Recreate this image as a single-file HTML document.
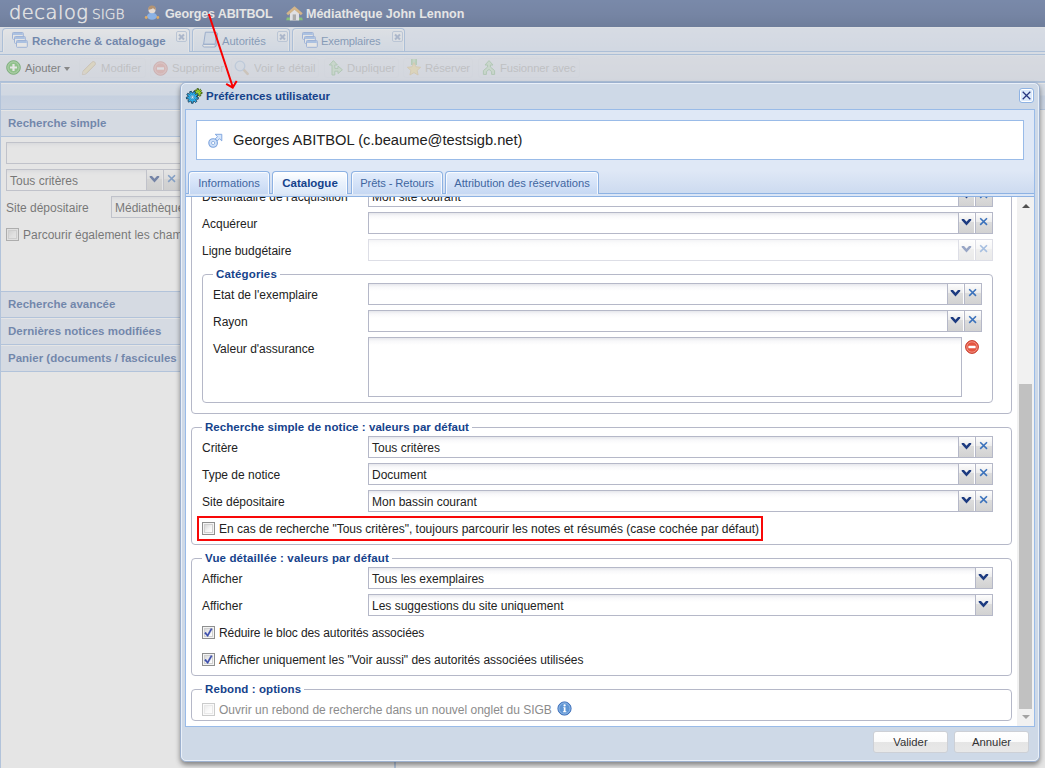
<!DOCTYPE html>
<html lang="fr">
<head>
<meta charset="utf-8">
<title>Decalog SIGB - Préférences utilisateur</title>
<style>
*{box-sizing:border-box;margin:0;padding:0}
html,body{width:1045px;height:768px;overflow:hidden;background:#fff}
body{font-family:"Liberation Sans",Arial,sans-serif;font-size:12px;color:#222;position:relative}
.a{position:absolute}
.t{position:absolute;white-space:nowrap;line-height:14px}
svg{position:absolute;overflow:visible}
/* header */
#hdr{position:absolute;left:0;top:0;width:1045px;height:27px;background:linear-gradient(#274787,#203e7c 55%,#102f6a)}
#hdr .logo{position:absolute;left:9px;top:5px;height:22px;overflow:hidden;font-family:"DejaVu Sans Light","DejaVu Sans",sans-serif;font-weight:200;font-size:19.4px;color:#fff;letter-spacing:.55px;line-height:30px;white-space:nowrap;-webkit-text-stroke:.45px #fff}
#hdr .sigb{position:absolute;left:92px;top:2px;font-family:"DejaVu Sans Light","DejaVu Sans",sans-serif;font-weight:200;font-size:13.8px;color:#fff;line-height:24px;-webkit-text-stroke:.3px #fff}
#hdr .h{position:absolute;top:7px;font-weight:bold;font-size:12.5px;color:#fff;line-height:15px;white-space:nowrap}
/* main tabs */
#tabs{position:absolute;left:0;top:27px;width:1045px;height:28px;background:linear-gradient(#e2ebfb,#d6e3f8);border-top:1px solid #ecf2fb;border-bottom:1px solid #8db2e3}
#tabs .sp{position:absolute;left:0;top:23px;width:1045px;height:3px;background:#e2ecfb;border-top:1px solid #8db2e3}
.mtab{position:absolute;top:0;height:23px;border:1px solid #8db2e3;border-bottom:none;border-radius:4px 4px 0 0;background:linear-gradient(#edf3fc,#d6e4f7);white-space:nowrap;font-size:11.2px;color:#416aa3;box-shadow:inset 1px 1px 0 rgba(255,255,255,.7),inset -1px 0 0 rgba(255,255,255,.7)}
.mtab.on{background:linear-gradient(#fbfcff,#e9f1fc 50%,#e2ecfb);color:#15428b;font-weight:bold;font-size:11.5px;height:24px}
.mtab .x{position:absolute;top:2px;width:11px;height:11px;border:1px solid #a9bfdf;border-radius:2px;background:rgba(255,255,255,.3)}
.mtab .x:before,.mtab .x:after{content:"";position:absolute;left:1px;top:3.5px;width:7px;height:2px;background:#8aa1c8;transform:rotate(45deg)}
.mtab .x:after{transform:rotate(-45deg)}
/* toolbar */
#tb{position:absolute;left:0;top:55px;width:1045px;height:27px;background:linear-gradient(#e2e8f4,#dae1f0);border-bottom:1px solid #8db2e3;border-top:1px solid #e9f0fa}
#tb .b{position:absolute;top:5px;font-size:11.3px;line-height:14px;white-space:nowrap;color:#333}
#tb .d{color:#969696;opacity:.62}
.ic{opacity:.42}
/* west panel */
#west{position:absolute;left:0;top:82px;width:395px;height:686px;background:#fff;border-left:1px solid #99bbe8;border-right:2px solid #99bbe8}
.phd{position:absolute;left:0;width:1045px;height:28px;border-top:1px solid #99bbe8;border-bottom:1px solid #99bbe8;background:linear-gradient(#fff 0,#fff 1px,#dbe8fa 1px,#d6e4f8 12px,#bfd4f3 13px,#c8daf5 100%)}
.ahd{position:absolute;left:1px;width:394px;height:27px;border-bottom:1px solid #99bbe8;border-top:1px solid #fff;background:#dfe9f9;color:#15428b;font-weight:bold;font-size:11.5px;line-height:14px;padding:5px 0 0 7px;white-space:nowrap}
.wf{position:absolute;height:22px;border:1px solid #b5b8c8;background:linear-gradient(#e8e9ee,#fafafb 3px,#fff 6px);font-size:12px;line-height:22px;padding-left:3px;white-space:nowrap;color:#222}
/* mask */
#mask{position:absolute;left:0;top:0;width:1045px;height:768px;background:rgba(204,204,204,.5)}
/* window */
#win{position:absolute;left:180px;top:82px;width:860px;height:680px;background:#ced9e7;border:1px solid #9db1cf;border-radius:6px;box-shadow:0 3px 5px 0 rgba(0,0,0,.42)}
#win .inner{position:absolute;left:0;top:0;right:0;bottom:0;border:1px solid #e9f0f9;border-radius:5px}
#wbody{position:absolute;left:185px;top:109px;width:850px;height:618px;background:#dfe8f6;border:1px solid #99bbe8}
#ubox{position:absolute;left:196px;top:120px;width:828px;height:40px;background:#fff;border:1px solid #99bbe8}
#tstrip{position:absolute;left:186px;top:161px;width:848px;height:33px;background:linear-gradient(#dfe8f6 30%,#cddbf0);border-bottom:1px solid #8db2e3}
.wt{position:absolute;top:171px;height:23px;border:1px solid #8db2e3;border-bottom:none;border-radius:4px 4px 0 0;background:linear-gradient(#e3edfc,#d5e3f8 50%,#c6d8f3);color:#3f66a0;font-size:11.2px;line-height:23px;text-align:center;white-space:nowrap;box-shadow:inset 1px 1px 0 rgba(255,255,255,.8),inset -1px 0 0 rgba(255,255,255,.8)}
.wt.on{background:linear-gradient(#ffffff,#eaf2fc 45%,#dbe8f9);color:#15428b;font-weight:bold;font-size:11.5px;height:24px}
#tsp{position:absolute;left:186px;top:194px;width:848px;height:3px;background:#dbe6f6;border-bottom:1px solid #8db2e3}
#content{position:absolute;left:186px;top:197px;width:848px;height:529px;background:#fff;overflow:hidden}
#cin{position:absolute;left:-186px;top:-197px;width:0;height:0}
#cin .t{font-size:12px;color:#222}
.f{position:absolute;height:22px;border:1px solid #b5b8c8;background:linear-gradient(#e6e7ec,#f8f8fa 3px,#fff 7px);font-size:12px;line-height:22px;padding-left:3px;white-space:nowrap;color:#222}
.f.c{border-right:none}
.tg{position:absolute;width:17px;height:22px;border:1px solid #b5b8c8;border-right:none;background:linear-gradient(#fdfdfd,#ececec 45%,#dddddd 45%,#d2d2d2)}
.tg.hl{box-shadow:inset -1px 0 0 #fff}
.tg.r{width:18px;border-right:1px solid #b5b8c8}
.tg svg{left:-1px;top:-1px}
.dis{opacity:.45}
.fs{position:absolute;border:1px solid #b5b8c8;border-radius:4px}
.lg{position:absolute;top:-8px;background:#fff;padding:0 3px;font-weight:bold;font-size:11.5px;line-height:14px;color:#15428b;white-space:nowrap}
.cb{position:absolute;width:13px;height:13px;border:1px solid #8e8f8f;background:#f4f4f4}
.cb i{position:absolute;left:1px;top:1px;right:1px;bottom:1px;border:1px solid #d0d0d0;background:linear-gradient(135deg,#d8d8d8,#f3f3f3 55%,#fff)}
#sb{position:absolute;left:1017px;top:197px;width:17px;height:529px;background:#f1f1f1}
#sb .th{position:absolute;left:2px;top:187px;width:13px;height:325px;background:#c1c1c1}
.btn{position:absolute;top:731px;width:75px;height:22px;border:1px solid #cdd0d6;border-radius:3px;background:linear-gradient(#ffffff,#fbfbfb 50%,#e5e5e5 50%,#e8e8e8);font-size:11.3px;line-height:21px;text-align:center;color:#333}
</style>
</head>
<body>
<div id="hdr"><span class="logo"><span style="display:block;margin-top:-7px">decalog</span></span><span class="sigb">SIGB</span><svg style="left:145px;top:5px" width="15" height="15" viewBox="0 0 15 15"><ellipse cx="7" cy="11.3" rx="5" ry="3.5" fill="#4a98ff"/><circle cx="1.2" cy="12.5" r="1.4" fill="#f08a00"/><circle cx="12.8" cy="12.5" r="1.4" fill="#f08a00"/><circle cx="7" cy="4.7" r="3.6" fill="#ffeadb"/><path d="M3.2 4.9C3 1.7 5.1 0.5 7.1 0.5C9.3 0.5 11.1 1.9 10.8 4.9C9.7 4.7 8.7 4 8.1 3.1C7.1 4.1 5.1 4.8 3.2 4.9Z" fill="#9a5a1a"/></svg><span class="h" style="left:165px;letter-spacing:-.12px">Georges ABITBOL</span><svg style="left:285.5px;top:5.5px" width="17" height="15" viewBox="0 0 17 15"><path d="M0.2 14.2H5.4V11.6H0.9Z" fill="#43b02c"/><path d="M11.6 14.2H16.8L16.1 11.6H11.6Z" fill="#43b02c"/><path d="M3.9 7L8.5 3L13.1 7V14.4H3.9Z" fill="#f4f4fa"/><rect x="6.7" y="8.4" width="3.3" height="6" fill="#8d8d8d"/><path d="M0.3 7.3L8.5 0.2L16.7 7.3L14.9 9.2L8.5 3.8L2.1 9.2Z" fill="#dc9e48"/></svg><span class="h" style="left:306px">Médiathèque John Lennon</span></div>
<div id="tabs"><div class="sp"></div><div class="mtab on" style="left:2px;width:188px"><span class="t" style="left:29px;top:5px">Recherche &amp; catalogage</span><i class="x" style="left:173px"></i></div><div class="mtab" style="left:192px;width:98px"><span class="t" style="left:29px;top:5px;letter-spacing:-.05px">Autorités</span><i class="x" style="left:84px"></i></div><div class="mtab" style="left:292px;width:113px"><span class="t" style="left:28px;top:5px;letter-spacing:-.2px">Exemplaires</span><i class="x" style="left:99px"></i></div></div>
<svg style="left:12px;top:32px" width="17" height="17" viewBox="0 0 17 17"><rect x="0.5" y="0.5" width="10.8" height="6.8" rx=".8" fill="#fff" stroke="#729ae0" stroke-width="1"/><rect x="1" y="1" width="9.8" height="2" fill="#8ab6f6"/><rect x="2.5" y="4.5" width="10.8" height="6.8" rx=".8" fill="#fff" stroke="#729ae0" stroke-width="1"/><rect x="3" y="5" width="9.8" height="2" fill="#8ab6f6"/><rect x="4.5" y="8.5" width="10.8" height="6.8" rx=".8" fill="#fff" stroke="#729ae0" stroke-width="1"/><rect x="5" y="9" width="9.8" height="2" fill="#8ab6f6"/></svg><svg style="left:202px;top:31px" width="17" height="18" viewBox="0 0 17 18"><path d="M3.4 1.2H14.2L13.2 13.2H1.6Z" fill="#cfe0f8" stroke="#6a8fca" stroke-width="1"/><path d="M1.2 13.4H13.2V16H2.2C0.6 16 0.4 14 1.2 13.4Z" fill="#fff" stroke="#6a8fca" stroke-width="1"/><path d="M14.2 1.2L15.6 2.4L14.6 14.6L13.2 16" fill="none" stroke="#6a8fca" stroke-width="1"/></svg><svg style="left:302px;top:32px" width="17" height="17" viewBox="0 0 17 17"><rect x="0.5" y="0.5" width="10.8" height="6.8" rx=".8" fill="#fff" stroke="#729ae0" stroke-width="1"/><rect x="1" y="1" width="9.8" height="2" fill="#8ab6f6"/><rect x="2.5" y="4.5" width="10.8" height="6.8" rx=".8" fill="#fff" stroke="#729ae0" stroke-width="1"/><rect x="3" y="5" width="9.8" height="2" fill="#8ab6f6"/><rect x="4.5" y="8.5" width="10.8" height="6.8" rx=".8" fill="#fff" stroke="#729ae0" stroke-width="1"/><rect x="5" y="9" width="9.8" height="2" fill="#8ab6f6"/></svg>
<div id="tb"><span class="b" style="left:25px">Ajouter</span><span class="b d" style="left:101px">Modifier</span><span class="b d" style="left:172px">Supprimer</span><span class="b d" style="left:254px">Voir le détail</span><span class="b d" style="left:347px">Dupliquer</span><span class="b d" style="left:425px;letter-spacing:-.1px">Réserver</span><span class="b d" style="left:500px;letter-spacing:-.12px">Fusionner avec</span></div>
<div class="a" style="left:64px;top:67px;width:0;height:0;border:3px solid transparent;border-top:4px solid #444;border-bottom:none"></div>
<div class="a" style="left:79px;top:58px;width:67px;height:20px;border:1px solid rgba(150,165,190,.06);border-radius:3px;background:rgba(255,255,255,.02)"></div><div class="a" style="left:150px;top:58px;width:77px;height:20px;border:1px solid rgba(150,165,190,.06);border-radius:3px;background:rgba(255,255,255,.02)"></div><div class="a" style="left:231px;top:58px;width:88px;height:20px;border:1px solid rgba(150,165,190,.06);border-radius:3px;background:rgba(255,255,255,.02)"></div><div class="a" style="left:324px;top:58px;width:75px;height:20px;border:1px solid rgba(150,165,190,.06);border-radius:3px;background:rgba(255,255,255,.02)"></div><div class="a" style="left:403px;top:58px;width:70px;height:20px;border:1px solid rgba(150,165,190,.06);border-radius:3px;background:rgba(255,255,255,.02)"></div><div class="a" style="left:478px;top:58px;width:102px;height:20px;border:1px solid rgba(150,165,190,.06);border-radius:3px;background:rgba(255,255,255,.02)"></div>
<svg style="left:6px;top:60px" width="15" height="15" viewBox="0 0 15 15"><circle cx="7.5" cy="7.5" r="6.8" fill="#55b64a" stroke="#2f8f2c" stroke-width="1"/><circle cx="7.5" cy="7.5" r="5.6" fill="none" stroke="#a6dca0" stroke-width=".8"/><path d="M7.5 4V11M4 7.5H11" stroke="#fff" stroke-width="2.2"/></svg><svg class="ic" style="left:81px;top:60px" width="16" height="16" viewBox="0 0 16 16"><path d="M2.2 11L11 2.2C11.8 1.4 13 1.4 13.8 2.2C14.6 3 14.6 4.2 13.8 5L5 13.8L1.4 14.6Z" fill="#f3d36b" stroke="#a5772a" stroke-width="1"/><path d="M2.2 11L5 13.8L1.4 14.6Z" fill="#e9c9a0"/></svg><svg class="ic" style="left:152.5px;top:60.5px" width="15" height="15" viewBox="0 0 15 15"><circle cx="7.5" cy="7.5" r="6.8" fill="#e0442e" stroke="#b52a1c" stroke-width="1"/><circle cx="7.5" cy="7.5" r="5.6" fill="none" stroke="#f3a79a" stroke-width=".8"/><path d="M4 7.5H11" stroke="#fff" stroke-width="2.4"/></svg><svg class="ic" style="left:234px;top:60px" width="16" height="16" viewBox="0 0 16 16"><path d="M9.2 9.2L13.6 13.8" stroke="#b98a4a" stroke-width="2.6" stroke-linecap="round"/><circle cx="6" cy="6" r="4.8" fill="#d5e6fb" stroke="#6f9fd8" stroke-width="1.3"/></svg><svg class="ic" style="left:328px;top:60px" width="15" height="16" viewBox="0 0 15 16"><path d="M4 15V5H1.4L5.4 0.6L9.4 5H6.8V8.4H10V6L14.4 9.8L10 13.6V11.2H6.8V15Z" fill="#a6dc98" stroke="#37962f" stroke-width="1"/></svg><svg class="ic" style="left:406px;top:59px" width="16" height="17" viewBox="0 0 16 17"><path d="M5 0H11V6H5Z" fill="#4aa83c"/><path d="M6.6 0H9.4V6H6.6Z" fill="#8fd482"/><path d="M8 3.6L9.9 7.8L14.6 8.3L11.1 11.4L12.1 16L8 13.6L3.9 16L4.9 11.4L1.4 8.3L6.1 7.8Z" fill="#ffd24d" stroke="#d49a1a" stroke-width=".9"/></svg><svg class="ic" style="left:482px;top:60px" width="14" height="15" viewBox="0 0 14 15"><path d="M7 0.6L11 5H8.4V7L12.6 10.6V14.4H9.6V11.6L7 9.4L4.4 11.6V14.4H1.4V10.6L5.6 7V5H3Z" fill="#a6dc98" stroke="#37962f" stroke-width="1"/></svg>
<div class="a" style="left:0;top:82px;width:1045px;height:686px;background:#fff"></div>
<div class="phd" style="top:82px"></div>
<div class="a" style="left:0;top:82px;width:1px;height:686px;background:#99bbe8"></div>
<div class="a" style="left:394px;top:110px;width:2px;height:658px;background:#99bbe8"></div>
<div class="ahd" style="top:110px">Recherche simple</div>
<div class="wf" style="left:6px;top:142px;width:384px"></div>
<div class="wf" style="left:6px;top:169px;width:141px;border-right:none">Tous critères</div><div class="tg hl" style="left:146px;top:169px"><svg width="18" height="22" viewBox="0 0 18 22"><path d="M3.7 7H6L8.5 9.7L11 7H13.2V8.3L8.5 13.4L3.7 8.3Z" fill="#1d3b80"/></svg></div><div class="tg r" style="left:163px;top:169px"><svg width="18" height="22" viewBox="0 0 18 22"><path d="M5.2 6.2L12 12.9M12 6.2L5.2 12.9" stroke="#3b72bc" stroke-width="1.55" fill="none"/></svg></div>
<span class="t" style="left:6px;top:201px">Site dépositaire</span>
<div class="wf" style="left:111px;top:196px;width:250px">Médiathèque John Lennon</div>
<div class="cb" style="left:6px;top:228px"><i></i></div>
<span class="t" style="left:23px;top:228px">Parcourir également les champs notes et résumés</span>
<div class="ahd" style="top:291px;border-top-color:#99bbe8">Recherche avancée</div>
<div class="ahd" style="top:318px">Dernières notices modifiées</div>
<div class="ahd" style="top:345px">Panier (documents / fascicules / autorités)</div>
<div id="mask"></div>
<div id="win"><div class="inner"></div></div>
<svg style="left:185px;top:87px" width="18" height="18" viewBox="0 0 18 18"><path d="M15.75 5.07L17.08 5.25L16.93 6.74L15.59 6.64L15.16 7.34L15.86 8.49L14.60 9.31L13.84 8.20L13.02 8.30L12.56 9.56L11.14 9.09L11.53 7.80L10.94 7.22L9.66 7.65L9.15 6.24L10.40 5.74L10.49 4.93L9.36 4.19L10.14 2.91L11.31 3.58L12.00 3.14L11.87 1.79L13.36 1.61L13.56 2.94L14.34 3.20L15.31 2.26L16.38 3.31L15.47 4.30Z" fill="#a2de26" stroke="#36500e" stroke-width=".9" stroke-linejoin="round"/><circle cx="13.1" cy="5.6" r="1" fill="#d9f58a" stroke="#4d7a14" stroke-width=".6"/><path d="M11.70 10.07L13.49 10.53L13.14 12.27L11.31 11.99L10.78 12.86L11.86 14.36L10.46 15.48L9.24 14.09L8.27 14.41L8.14 16.26L6.36 16.21L6.31 14.36L5.36 13.99L4.07 15.31L2.74 14.13L3.89 12.69L3.41 11.79L1.56 11.98L1.30 10.21L3.11 9.85L3.32 8.85L1.79 7.81L2.72 6.29L4.34 7.18L5.14 6.54L4.64 4.76L6.33 4.20L7.00 5.92L8.02 5.94L8.78 4.26L10.44 4.91L9.85 6.66L10.61 7.34L12.28 6.53L13.13 8.10L11.55 9.06Z" fill="#2eb2ee" stroke="#173d58" stroke-width=".9" stroke-linejoin="round"/><circle cx="7.4" cy="10.2" r="2.5" fill="#7fd6fa" stroke="#1b7ab4" stroke-width=".7"/><circle cx="7.4" cy="10.2" r="1.1" fill="#fff" stroke="#1b5e8a" stroke-width=".5"/></svg>
<span class="t" style="left:206px;top:89px;font-weight:bold;font-size:11.5px;color:#15428b">Préférences utilisateur</span>
<div class="a" style="left:1019px;top:88px;width:15px;height:15px;border:1px solid #8fb3e3;border-radius:3px;background:#dbe9fb;box-shadow:inset 0 0 0 1px #fff"><svg width="13" height="13" viewBox="0 0 13 13" style="left:0;top:0"><path d="M2.7 2.7L10.3 10.3M10.3 2.7L2.7 10.3" stroke="#27367f" stroke-width="1.25"/></svg></div>
<div id="wbody"></div>
<div id="ubox"></div><svg style="left:207px;top:133px" width="16" height="16" viewBox="0 0 16 16"><path d="M8.2 1.3H14.8V7.9L12.5 5.7L9.6 8.6L7.6 6.6L10.5 3.6Z" fill="#d6e6fb" stroke="#7ba2dc" stroke-width=".9" stroke-linejoin="miter"/><circle cx="6.1" cy="10" r="4.3" fill="#cfe0f8" stroke="#7ba2dc" stroke-width="1.1"/><circle cx="6.1" cy="10" r="1.6" fill="#fff" stroke="#8aaee0" stroke-width=".9"/></svg>
<span class="t" style="left:233px;top:131px;font-size:14.7px;line-height:19px;color:#222">Georges ABITBOL (c.beaume@testsigb.net)</span>
<div id="tstrip"></div>
<div class="wt" style="left:188px;width:82px">Informations</div><div class="wt on" style="left:272px;width:76px">Catalogue</div><div class="wt" style="left:351px;width:92px;letter-spacing:-.12px">Prêts - Retours</div><div class="wt" style="left:445px;width:154px">Attribution des réservations</div>
<div id="tsp"></div>
<div id="content"><div id="cin"><div class="fs" style="left:191px;top:130px;width:821px;height:284px"></div>
<span class="t" style="left:202px;top:190px">Destinataire de l'acquisition</span>
<div class="f c" style="left:368px;top:185px;width:590px">Mon site courant</div><div class="tg hl" style="left:958px;top:185px"><svg width="18" height="22" viewBox="0 0 18 22"><path d="M3.7 7H6L8.5 9.7L11 7H13.2V8.3L8.5 13.4L3.7 8.3Z" fill="#1d3b80"/></svg></div><div class="tg r" style="left:975px;top:185px"><svg width="18" height="22" viewBox="0 0 18 22"><path d="M5.2 6.2L12 12.9M12 6.2L5.2 12.9" stroke="#3b72bc" stroke-width="1.55" fill="none"/></svg></div>
<span class="t" style="left:202px;top:217px">Acquéreur</span>
<div class="f c" style="left:368px;top:212px;width:590px"></div><div class="tg hl" style="left:958px;top:212px"><svg width="18" height="22" viewBox="0 0 18 22"><path d="M3.7 7H6L8.5 9.7L11 7H13.2V8.3L8.5 13.4L3.7 8.3Z" fill="#1d3b80"/></svg></div><div class="tg r" style="left:975px;top:212px"><svg width="18" height="22" viewBox="0 0 18 22"><path d="M5.2 6.2L12 12.9M12 6.2L5.2 12.9" stroke="#3b72bc" stroke-width="1.55" fill="none"/></svg></div>
<span class="t" style="left:202px;top:244px">Ligne budgétaire</span>
<div class="f c dis" style="left:368px;top:239px;width:590px"></div><div class="tg hl dis" style="left:958px;top:239px"><svg width="18" height="22" viewBox="0 0 18 22"><path d="M3.7 7H6L8.5 9.7L11 7H13.2V8.3L8.5 13.4L3.7 8.3Z" fill="#1d3b80"/></svg></div><div class="tg r dis" style="left:975px;top:239px"><svg width="18" height="22" viewBox="0 0 18 22"><path d="M5.2 6.2L12 12.9M12 6.2L5.2 12.9" stroke="#3b72bc" stroke-width="1.55" fill="none"/></svg></div>
<div class="fs" style="left:202px;top:274px;width:791px;height:129px"><span class="lg" style="left:10px;letter-spacing:0.15px">Catégories</span></div>
<span class="t" style="left:213px;top:288px">Etat de l'exemplaire</span>
<div class="f c" style="left:368px;top:283px;width:579px"></div><div class="tg hl" style="left:947px;top:283px"><svg width="18" height="22" viewBox="0 0 18 22"><path d="M3.7 7H6L8.5 9.7L11 7H13.2V8.3L8.5 13.4L3.7 8.3Z" fill="#1d3b80"/></svg></div><div class="tg r" style="left:964px;top:283px"><svg width="18" height="22" viewBox="0 0 18 22"><path d="M5.2 6.2L12 12.9M12 6.2L5.2 12.9" stroke="#3b72bc" stroke-width="1.55" fill="none"/></svg></div>
<span class="t" style="left:213px;top:315px">Rayon</span>
<div class="f c" style="left:368px;top:310px;width:579px"></div><div class="tg hl" style="left:947px;top:310px"><svg width="18" height="22" viewBox="0 0 18 22"><path d="M3.7 7H6L8.5 9.7L11 7H13.2V8.3L8.5 13.4L3.7 8.3Z" fill="#1d3b80"/></svg></div><div class="tg r" style="left:964px;top:310px"><svg width="18" height="22" viewBox="0 0 18 22"><path d="M5.2 6.2L12 12.9M12 6.2L5.2 12.9" stroke="#3b72bc" stroke-width="1.55" fill="none"/></svg></div>
<span class="t" style="left:213px;top:342px">Valeur d'assurance</span>
<div class="f" style="left:368px;top:337px;width:594px;height:60px"></div>
<svg style="left:965px;top:340px" width="14" height="14" viewBox="0 0 14 14"><circle cx="7" cy="7" r="6.4" fill="#e5543f" stroke="#c53a2a" stroke-width="1"/><circle cx="7" cy="7" r="5.2" fill="none" stroke="#f2a195" stroke-width=".8"/><rect x="3.4" y="5.8" width="7.2" height="2.5" rx=".6" fill="#fff"/></svg>
<div class="fs" style="left:191px;top:427px;width:821px;height:118px"><span class="lg" style="left:10px;letter-spacing:0.055px">Recherche simple de notice : valeurs par défaut</span></div>
<span class="t" style="left:202px;top:441px">Critère</span>
<div class="f c" style="left:368px;top:436px;width:590px">Tous critères</div><div class="tg hl" style="left:958px;top:436px"><svg width="18" height="22" viewBox="0 0 18 22"><path d="M3.7 7H6L8.5 9.7L11 7H13.2V8.3L8.5 13.4L3.7 8.3Z" fill="#1d3b80"/></svg></div><div class="tg r" style="left:975px;top:436px"><svg width="18" height="22" viewBox="0 0 18 22"><path d="M5.2 6.2L12 12.9M12 6.2L5.2 12.9" stroke="#3b72bc" stroke-width="1.55" fill="none"/></svg></div>
<span class="t" style="left:202px;top:468px">Type de notice</span>
<div class="f c" style="left:368px;top:463px;width:590px">Document</div><div class="tg hl" style="left:958px;top:463px"><svg width="18" height="22" viewBox="0 0 18 22"><path d="M3.7 7H6L8.5 9.7L11 7H13.2V8.3L8.5 13.4L3.7 8.3Z" fill="#1d3b80"/></svg></div><div class="tg r" style="left:975px;top:463px"><svg width="18" height="22" viewBox="0 0 18 22"><path d="M5.2 6.2L12 12.9M12 6.2L5.2 12.9" stroke="#3b72bc" stroke-width="1.55" fill="none"/></svg></div>
<span class="t" style="left:202px;top:495px">Site dépositaire</span>
<div class="f c" style="left:368px;top:490px;width:590px">Mon bassin courant</div><div class="tg hl" style="left:958px;top:490px"><svg width="18" height="22" viewBox="0 0 18 22"><path d="M3.7 7H6L8.5 9.7L11 7H13.2V8.3L8.5 13.4L3.7 8.3Z" fill="#1d3b80"/></svg></div><div class="tg r" style="left:975px;top:490px"><svg width="18" height="22" viewBox="0 0 18 22"><path d="M5.2 6.2L12 12.9M12 6.2L5.2 12.9" stroke="#3b72bc" stroke-width="1.55" fill="none"/></svg></div>
<div class="a" style="left:197px;top:516px;width:566px;height:25px;border:2px solid #f80808"></div>
<div class="cb" style="left:202px;top:522px"><i></i></div>
<span class="t" style="left:219px;top:522px">En cas de recherche "Tous critères", toujours parcourir les notes et résumés (case cochée par défaut)</span>
<div class="fs" style="left:191px;top:558px;width:821px;height:118px"><span class="lg" style="left:10px;letter-spacing:0.14px">Vue détaillée : valeurs par défaut</span></div>
<span class="t" style="left:202px;top:572px">Afficher</span>
<div class="f c" style="left:368px;top:567px;width:607px">Tous les exemplaires</div><div class="tg r" style="left:975px;top:567px"><svg width="18" height="22" viewBox="0 0 18 22"><path d="M3.7 7H6L8.5 9.7L11 7H13.2V8.3L8.5 13.4L3.7 8.3Z" fill="#1d3b80"/></svg></div>
<span class="t" style="left:202px;top:599px">Afficher</span>
<div class="f c" style="left:368px;top:594px;width:607px">Les suggestions du site uniquement</div><div class="tg r" style="left:975px;top:594px"><svg width="18" height="22" viewBox="0 0 18 22"><path d="M3.7 7H6L8.5 9.7L11 7H13.2V8.3L8.5 13.4L3.7 8.3Z" fill="#1d3b80"/></svg></div>
<div class="cb" style="left:202px;top:626px"><i></i><svg width="13" height="13" viewBox="0 0 13 13" style="left:-1px;top:-1px"><path d="M2.5 7.3L3.7 6.1L5.5 8.5L8.9 2.4L10.2 3.1L5.8 10.7Z" fill="#3a4cab" stroke="#3a4cab" stroke-width=".4"/></svg></div>
<span class="t" style="left:219px;top:626px;letter-spacing:-.09px">Réduire le bloc des autorités associées</span>
<div class="cb" style="left:202px;top:653px"><i></i><svg width="13" height="13" viewBox="0 0 13 13" style="left:-1px;top:-1px"><path d="M2.5 7.3L3.7 6.1L5.5 8.5L8.9 2.4L10.2 3.1L5.8 10.7Z" fill="#3a4cab" stroke="#3a4cab" stroke-width=".4"/></svg></div>
<span class="t" style="left:219px;top:653px">Afficher uniquement les "Voir aussi" des autorités associées utilisées</span>
<div class="fs" style="left:191px;top:689px;width:821px;height:32px"><span class="lg" style="left:10px;letter-spacing:0.1px">Rebond : options</span></div>
<div class="cb dis" style="left:202px;top:703px"><i></i></div>
<span class="t" style="left:219px;top:703px;color:#8c8c8c">Ouvrir un rebond de recherche dans un nouvel onglet du SIGB</span>
<svg style="left:556.5px;top:701.3px" width="15" height="15" viewBox="0 0 15 15"><circle cx="7.5" cy="7.5" r="6.6" fill="#5f95d4" stroke="#3a6cb8" stroke-width="1"/><circle cx="7.5" cy="7.5" r="5.5" fill="none" stroke="#9cc0ea" stroke-width=".8"/><circle cx="7.6" cy="4.4" r="1.15" fill="#fff"/><path d="M6.3 6.2H8.5V10.2H9.4V11.2H5.9V10.2H6.8V7.1H6.3Z" fill="#fff"/></svg></div></div>
<div id="sb"><div class="th"></div><div class="a" style="left:4.5px;top:7px;width:0;height:0;border:4.5px solid transparent;border-bottom:4.5px solid #505050;border-top:none"></div><div class="a" style="left:4.5px;top:518px;width:0;height:0;border:4px solid transparent;border-top:4.5px solid #a3a3a3;border-bottom:none"></div></div>
<div class="btn" style="left:873px">Valider</div><div class="btn" style="left:954px">Annuler</div>
<svg style="left:0;top:0" width="1045" height="768" viewBox="0 0 1045 768"><path d="M208.8 14L232.6 86.5M226.2 83.8L232.7 87.6L236.7 80.9" stroke="#f80000" stroke-width="2" fill="none" stroke-linecap="butt" stroke-linejoin="miter"/></svg>
</body>
</html>
